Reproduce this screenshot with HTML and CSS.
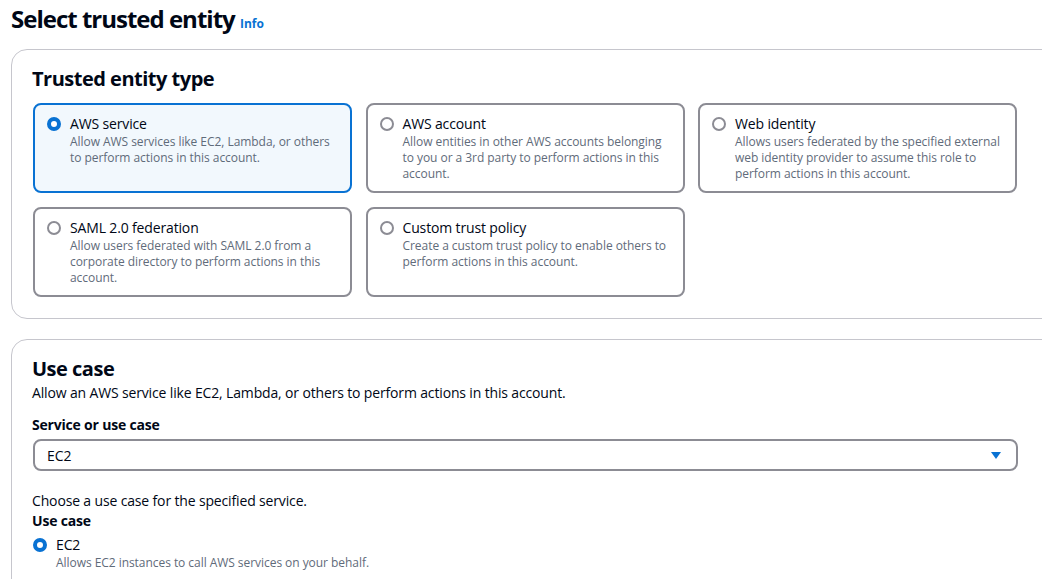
FILE: index.html
```html
<!DOCTYPE html>
<html>
<head>
<meta charset="utf-8">
<link rel="stylesheet" href="styles.css">
</head>
<body>
<div class="page">
  <h1 class="title">Select trusted entity <a class="info">Info</a></h1>

  <section class="panel panel-entity">
    <h2 class="panel-title">Trusted entity type</h2>
    <div class="tiles">
      <div class="tile selected">
        <span class="radio on"></span>
        <div class="tile-text">
          <div class="tile-label">AWS service</div>
          <div class="tile-desc">Allow AWS services like EC2, Lambda, or others to perform actions in this account.</div>
        </div>
      </div>
      <div class="tile">
        <span class="radio"></span>
        <div class="tile-text">
          <div class="tile-label">AWS account</div>
          <div class="tile-desc">Allow entities in other AWS accounts belonging to you or a 3rd party to perform actions in this account.</div>
        </div>
      </div>
      <div class="tile">
        <span class="radio"></span>
        <div class="tile-text">
          <div class="tile-label">Web identity</div>
          <div class="tile-desc">Allows users federated by the specified external web identity provider to assume this role to perform actions in this account.</div>
        </div>
      </div>
      <div class="tile">
        <span class="radio"></span>
        <div class="tile-text">
          <div class="tile-label">SAML 2.0 federation</div>
          <div class="tile-desc">Allow users federated with SAML 2.0 from a corporate directory to perform actions in this account.</div>
        </div>
      </div>
      <div class="tile">
        <span class="radio"></span>
        <div class="tile-text">
          <div class="tile-label">Custom trust policy</div>
          <div class="tile-desc">Create a custom trust policy to enable others to perform actions in this account.</div>
        </div>
      </div>
    </div>
  </section>

  <section class="panel panel-usecase">
    <h2 class="panel-title">Use case</h2>
    <p class="panel-desc">Allow an AWS service like EC2, Lambda, or others to perform actions in this account.</p>
    <div class="field-label">Service or use case</div>
    <div class="select">
      <span>EC2</span>
      <svg class="caret" width="12" height="10" viewBox="0 0 12 10"><path d="M1 2 L11 2 L6 9 Z" fill="#0972d3"/></svg>
    </div>
    <p class="hint">Choose a use case for the specified service.</p>
    <div class="field-label2">Use case</div>
    <div class="option">
      <span class="radio on"></span>
      <div class="tile-text">
        <div class="tile-label">EC2</div>
        <div class="tile-desc">Allows EC2 instances to call AWS services on your behalf.</div>
      </div>
    </div>
  </section>
</div>
</body>
</html>
```
FILE: styles.css
```css
* { box-sizing: border-box; }
html, body {
  margin: 0;
  padding: 0;
  background: #ffffff;
  overflow: hidden;
}
body {
  font-family: "Open Sans", "Noto Sans", Arial, sans-serif;
  color: #000716;
  width: 1042px;
  height: 579px;
}
.page {
  padding: 3px 0 0 11px;
}
.title {
  margin: 0;
  font-size: 24px;
  font-weight: 700;
  line-height: 32px;
  letter-spacing: -1px;
  color: #000716;
}
.info {
  font-size: 12px;
  font-weight: 700;
  color: #0972d3;
  margin-left: 0;
  letter-spacing: 0;
}
.panel {
  border: 1px solid #c6c6cd;
  border-radius: 16px;
  width: 1060px;
  padding: 15px 20px 20px 20px;
}
.panel-entity {
  margin-top: 9px;
  height: 270px;
}
.panel-usecase {
  margin-top: 20px;
  height: 260px;
  padding-top: 15px;
}
.panel-title {
  margin: 0;
  font-size: 20px;
  font-weight: 700;
  line-height: 28px;
  letter-spacing: -0.5px;
}
.tiles {
  margin-top: 10px;
  width: 986px;
  display: grid;
  grid-template-columns: repeat(3, 1fr);
  column-gap: 13.5px;
  row-gap: 14px;
  padding-left: 1px;
  padding-right: 1px;
}
.tile {
  height: 90px;
  border: 2px solid #8c8c94;
  border-radius: 8px;
  padding: 9px 12px 7px;
  display: flex;
  gap: 9px;
}
.tile.selected {
  border-color: #0972d3;
  background: #f2f8fd;
}
.radio {
  flex: none;
  width: 14px;
  height: 14px;
  border-radius: 50%;
  border: 2px solid #8c8c94;
  background: #fff;
  margin-top: 3px;
}
.radio.on {
  border: 4px solid #0972d3;
}
.tile-text {
  display: flex;
  flex-direction: column;
}
.tile-label {
  font-size: 14px;
  line-height: 20px;
  color: #000716;
  letter-spacing: -0.15px;
}
.tile-desc {
  font-size: 12px;
  line-height: 16px;
  color: #5f6b7a;
  letter-spacing: -0.05px;
}
.panel-desc {
  margin: 0;
  font-size: 14px;
  line-height: 20px;
  letter-spacing: -0.15px;
}
.field-label {
  margin-top: 12px;
  font-size: 14px;
  font-weight: 700;
  line-height: 20px;
  letter-spacing: -0.2px;
}
.select {
  margin-top: 4px;
  width: 985px;
  height: 32px;
  border: 2px solid #8c8c94;
  border-radius: 8px;
  padding: 0 14px 0 12px;
  display: flex;
  align-items: center;
  justify-content: space-between;
  font-size: 14px;
  margin-left: 1px;
}
.hint {
  margin: 20px 0 0 0;
  font-size: 14px;
  line-height: 20px;
  letter-spacing: -0.15px;
}
.field-label2 {
  font-size: 14px;
  font-weight: 700;
  line-height: 20px;
  margin-top: 0;
  letter-spacing: -0.2px;
}
.option {
  display: flex;
  gap: 9px;
  margin-top: 4px;
  padding-left: 1px;
}
```
